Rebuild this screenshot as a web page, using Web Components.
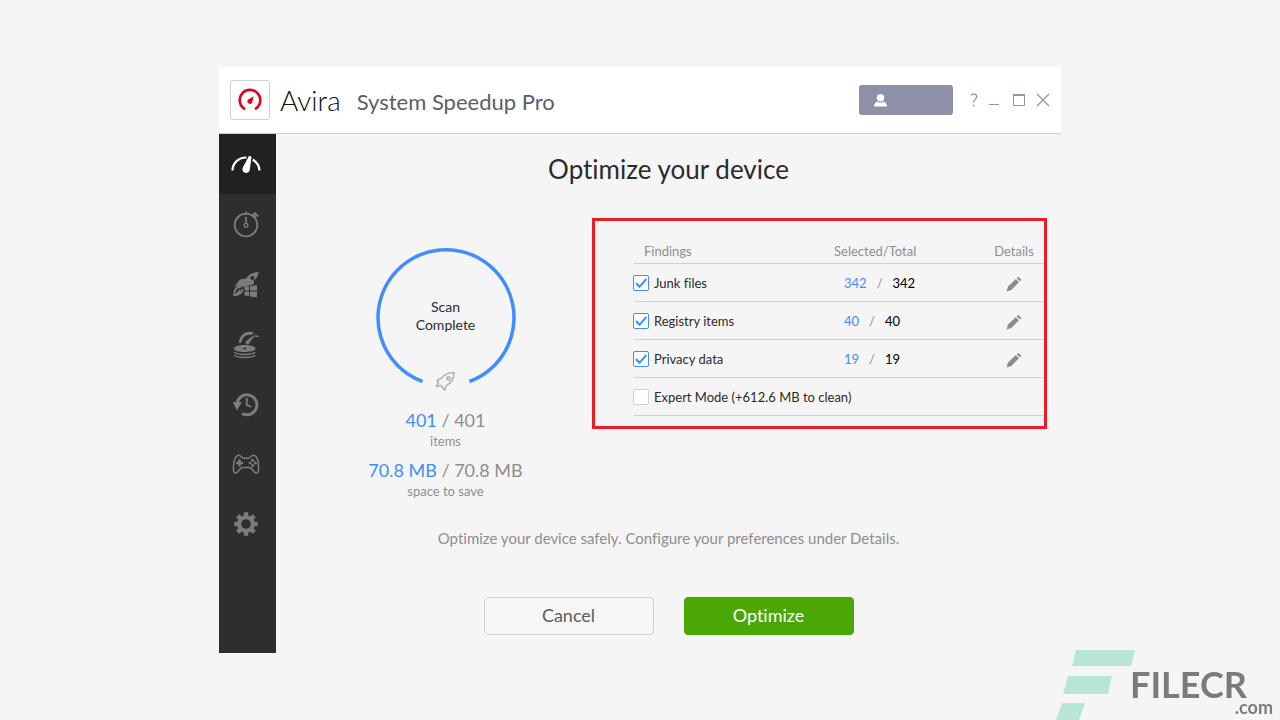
<!DOCTYPE html>
<html lang="en">
<head>
<meta charset="utf-8">
<meta name="viewport" content="width=device-width, initial-scale=1">
<title>System Speedup Pro</title>
<style>
  html { height: 100%; }
  body {
    margin: 0; min-height: 100%; box-sizing: border-box; padding: 16px;
    display: flex; align-items: center; justify-content: center;
    background: #f5f5f5; color: #2b2b2b;
    font-family: Lato, "Noto Sans", sans-serif; font-size: 14px; line-height: 18px;
    font-variant-ligatures: none;
    --blue: #3f8efc; --grey: #8e8e8e; --line: #cfcfcf;
  }
</style>
</head>
<body>
<app-window>
  <title-bar slot="header" brand="Avira" product="System Speedup Pro"></title-bar>
  <side-nav slot="nav"></side-nav>
  <span slot="title">Optimize your device</span>
  <scan-summary slot="summary"></scan-summary>
  <findings-table slot="findings"></findings-table>
  <span slot="hint">Optimize your device safely. Configure your preferences under Details.</span>
  <action-button slot="actions">Cancel</action-button>
  <action-button slot="actions" primary>Optimize</action-button>
</app-window>
<site-mark></site-mark>

<script>
const define = (name, html, setup) => customElements.define(name, class extends HTMLElement {
  constructor() {
    super();
    this.attachShadow({ mode: "open" }).innerHTML = html;
  }
  connectedCallback() { if (setup) setup(this, this.shadowRoot); }
});

define("app-window", `
<style>
  :host { display: block; width: 100%; max-width: 842px; }
  .body { display: grid; grid-template-columns: 57px 1fr; }
  main { display: flex; flex-direction: column; align-items: center; padding: 16px 0 18px; }
  h1 { margin: 0; font-weight: 400; font-size: 26px; line-height: 38px; }
  .content { align-self: stretch; display: grid; grid-template-columns: 1fr 455px; align-items: start; padding: 30px 14px 0 23px; }
  .summary { padding-top: 30px; }
  .hint { margin: 26px 0 0; font-size: 15px; line-height: 24px; color: var(--grey); }
  .actions { display: flex; gap: 30px; margin-top: 47px; }
</style>
<slot name="header"></slot>
<div class="body">
  <slot name="nav"></slot>
  <main>
    <h1><slot name="title"></slot></h1>
    <div class="content">
      <div class="summary"><slot name="summary"></slot></div>
      <slot name="findings"></slot>
    </div>
    <p class="hint"><slot name="hint"></slot></p>
    <div class="actions"><slot name="actions"></slot></div>
  </main>
</div>`);

define("title-bar", `
<style>
  :host { display: block; background: #fff; border-bottom: 1px solid #cbcdd0; }
  header { display: flex; align-items: center; min-height: 66px; padding: 0 8px 0 11px; }
  .tile { display: grid; place-items: center; box-sizing: border-box; width: 40px; height: 40px; border: 1px solid #c9d2d2; border-radius: 3px; }
  .brand { margin-left: 10px; font-size: 28px; font-weight: 300; line-height: 40px; color: #111; }
  .product { margin-left: 16px; padding-top: 4px; font-size: 22px; line-height: 36px; color: #5a5f69; flex: 1; }
  button { border: 0; padding: 0; background: none; font: inherit; color: #8d94ae; display: grid; place-items: center; }
  .user { width: 94px; height: 30px; border-radius: 3px; background: #8d90a6; justify-items: start; padding-left: 15px; margin-right: 12px; }
  .controls { display: flex; gap: 4px; }
  .controls button { width: 20px; height: 20px; }
  .controls button:first-child { width: 16px; }
  svg { display: block; }
</style>
<header>
  <span class="tile"><svg width="26" height="26" viewBox="0 0 26 26">
    <path d="M8 22.2A10.300 10.300 0 1 1 18 22.200" fill="none" stroke="#e2001a" stroke-width="2.600"/>
    <path d="M16.600 9.200L15.200 15.400A2.500 2.500 0 1 1 11.200 12.500Z" fill="#e2001a"/></svg></span>
  <span class="brand"></span><span class="product"></span>
  <button class="user" aria-label="Account"><svg width="13" height="13" viewBox="0 0 13 13" fill="#fff">
    <circle cx="6.500" cy="3.800" r="3.700"/><path d="M0 12.500C.2 9 2 7.700 3.600 7.400C5 9 8 9 9.400 7.400C11 7.700 12.800 9 13 12.500Z"/></svg></button>
  <div class="controls">
    <button aria-label="Help"><svg width="14" height="14" viewBox="0 0 14 14" fill="none" stroke="currentColor" stroke-width="1.300"><path d="M5 2.200C6.500.6 10.700.6 10.700 3.600C10.700 6 7.700 6.300 7.700 9.500M7.700 11.800V13.500"/></svg></button>
    <button aria-label="Minimize"><svg width="14" height="14" viewBox="0 0 14 14"><path d="M1 11h10v1H1z" fill="currentColor"/></svg></button>
    <button aria-label="Maximize"><svg width="14" height="14" viewBox="0 0 14 14" fill="none" stroke="currentColor"><path d="M1.500 1v11.500h11V1"/><path d="M1 2h12" stroke-width="2"/></svg></button>
    <button aria-label="Close"><svg width="14" height="14" viewBox="0 0 14 14" fill="none" stroke="currentColor" stroke-width="1.200"><path d="M1 1l12 12M13 1L1 13"/></svg></button>
  </div>
</header>`, (el, root) => {
  root.querySelector(".brand").textContent = el.getAttribute("brand");
  root.querySelector(".product").textContent = el.getAttribute("product");
});

define("side-nav", `
<style>
  :host { display: block; background: #2e2e2e; }
  nav { display: flex; flex-direction: column; }
  button { height: 60px; border: 0; padding: 0 4px 0 0; background: none; color: #7c7c7c; display: grid; place-items: center; }
  button[aria-current] { background: #212121; color: #fff; }
  svg { display: block; width: 32px; height: 32px; fill: none; stroke: currentColor; }
  .f { fill: currentColor; stroke: none; }
</style>
<nav aria-label="Sections">
  <button aria-current="page" aria-label="Status"><svg viewBox="0 0 32 32">
    <path d="M2.500 22.500A13.500 13 0 0 1 16.500 9.500M22.800 11.800A13 13 0 0 1 29.500 22.500" stroke-width="2.200"/>
    <path class="f" d="M18.800 8.200Q21 7.500 21.500 9L19.800 21.500A3.700 3.700 0 1 1 12.700 19.800Z"/></svg></button>
  <button aria-label="Scan"><svg viewBox="0 0 32 32">
    <circle cx="16" cy="17" r="11.300" stroke-width="1.800"/><circle cx="16" cy="17.300" r="1.900" stroke-width="1.300"/>
    <path d="M16 9v6.500M16 3.500v3M24 4.500l4.500 4M22.500 6l3.500 3" stroke-width="1.700"/></svg></button>
  <button aria-label="Startup"><svg viewBox="0 0 32 32">
    <path class="f" fill-rule="evenodd" d="M28.500 4Q20 4.500 16 10.500L10 11.500L4.500 18.500L10.500 18L15.500 20L18.500 18L24 16L23.500 12.500Q28 10 28.500 4ZM22.500 8A2 2 0 1 1 22.400 8Z"/>
    <path d="M11 19C6 18.500 4.200 22 4.200 27.300C9 27 12 25.500 12.500 21" stroke-width="2"/><path class="f" d="M4 28l6-7l1 4z"/>
    <path d="M14 19l13-2.500M14 23h13M19.500 18v10" stroke="#2e2e2e"/>
    <path class="f" d="M14.500 18.800l4.500-.7v4.500h-4.500zM20 18l7-1v5.600h-7zM14.500 23.600H19v4.500l-4.500-.7zM20 23.600h7v5.800l-7-1z"/></svg></button>
  <button aria-label="Disk"><svg viewBox="0 0 32 32">
    <path class="f" fill-rule="evenodd" d="M4 20.500C4 15.800 25.500 15.800 25.500 20.500S4 25.200 4 20.500ZM12.800 20.500C12.800 21.500 16.800 21.500 16.800 20.500S12.800 19.500 12.800 20.500Z"/>
    <path d="M4.500 24C6 27.200 23.500 27.200 25 24M4.500 27C6 30.200 23.500 30.200 25 27" stroke-width="1.500"/>
    <path class="f" d="M9 15C9 8 15 1.500 24 4.500L21.500 7C16 5.800 13 9 11 15ZM26.500 5.500L19.500 14.500A2 2 0 1 1 16.800 12.500ZM26.800 6.800L29 9H24.700Z"/></svg></button>
  <button aria-label="History"><svg viewBox="0 0 32 32">
    <path d="M7 15.500A10 10 0 1 1 12 25.500" stroke-width="3"/>
    <path class="f" d="M2.800 14H12L6.900 22.500Z"/><path d="M16.700 10v7.200l4.300 1.500" stroke-width="1.900"/></svg></button>
  <button aria-label="Games"><svg viewBox="0 0 32 32">
    <path d="M9 7.200C10.500 7.200 12 10 13.500 10.200H18.500C20 10 21.500 7.200 23.200 7.200C27.500 7.200 28.600 15 28.600 21C28.600 26.200 25.500 26 23.200 22.500C22 20.500 20.500 19.500 18.500 19.500H13.500C11.500 19.500 10 20.500 8.800 22.500C6.500 26 3.400 26.200 3.400 21C3.400 15 4.500 7.200 9 7.200Z" stroke-width="1.500"/>
    <path d="M9.500 11.500v7M6 15h7" stroke-width="2.400"/><g class="f"><circle cx="22.700" cy="12.300" r="1.500"/><circle cx="22.700" cy="17.600" r="1.500"/><circle cx="20" cy="15" r="1.500"/><circle cx="25.400" cy="15" r="1.500"/></g></svg></button>
  <button aria-label="Settings"><svg viewBox="0 0 32 32">
    <circle cx="16" cy="16" r="6.800" stroke-width="4"/>
    <g stroke-width="4.400"><path d="M16 8.500v-4.200M16 23.500v4.200M8.500 16H4.300M23.500 16h4.200M10.700 10.700l-3-3M21.300 10.700l3-3M10.700 21.300l-3 3M21.300 21.300l3 3"/></g></svg></button>
</nav>`);

define("scan-summary", `
<style>
  :host { display: flex; flex-direction: column; align-items: center; text-align: center; color: var(--grey); }
  .ring { display: grid; place-items: center; margin-bottom: 20px; }
  .ring > * { grid-area: 1 / 1; }
  .state { width: 80px; padding-bottom: 4px; color: #2b2b2b; }
  .figure { font-size: 18px; line-height: 24px; }
  .figure b { font-weight: 400; color: var(--blue); }
  .unit { font-size: 13px; line-height: 18px; }
  .unit + .figure { margin-top: 8px; }
  svg { display: block; overflow: visible; }
</style>
<div class="ring">
  <svg width="140" height="140" viewBox="0 0 140 140" fill="none">
    <path d="M46.500 133.500A68 68 0 1 1 93.500 133.500" stroke="#3f8efc" stroke-width="3.500"/>
    <g stroke="#b4b4b4" stroke-width="1.700" stroke-linejoin="round">
      <path d="M78 124.500C71 124.500 68 127 65.500 130L61 132.500L62.500 134.500L60.500 138.500L65 137.500L68.500 142L70.500 137.500C76 134.500 78 131 78 124.500Z"/>
      <circle cx="72.500" cy="130.500" r="1.600"/></g>
  </svg>
  <span class="state">Scan Complete</span>
</div>
<div class="figure"><b>401</b> / 401</div>
<div class="unit">items</div>
<div class="figure"><b>70.8 MB</b> / 70.8 MB</div>
<div class="unit">space to save</div>`);

define("findings-table", `
<style>
  :host { display: block; border: 3px solid #ed1c24; padding: 0 0 10px 39px; }
  table { width: 100%; border-collapse: separate; border-spacing: 0; table-layout: fixed; font-size: 13px; line-height: 18px; }
  th, td { padding: 0; text-align: left; border-bottom: 1px solid var(--line); font-weight: 400; }
  th { box-sizing: border-box; height: 43px; padding-bottom: 3px; vertical-align: bottom; color: var(--grey); }
  th:first-child { padding-left: 10px; }
  td { height: 37px; }
  .col-count { width: 150px; } .col-details { width: 60px; }
  th:last-child, td.edit { text-align: center; }
  label { display: flex; align-items: center; gap: 5px; margin-left: -1px; }
  input { appearance: none; box-sizing: border-box; flex: none; width: 16px; height: 16px; margin: 0; border: 1px solid #cfcfcf; border-radius: 2px; background: #fff; }
  input:checked { border-color: var(--blue); background: #fff url("data:image/svg+xml,%3Csvg xmlns='http://www.w3.org/2000/svg' viewBox='0 0 14 14'%3E%3Cpath d='M2 7l3.500 3.800L12.300 3' fill='none' stroke='%233f8efc' stroke-width='2'/%3E%3C/svg%3E"); }
  .count { display: flex; gap: 10px; padding-left: 10px; color: #000; }
  .count b { font-weight: 400; color: var(--blue); }
  .count i { font-style: normal; color: var(--grey); }
  button { border: 0; padding: 0; background: none; color: #8c8c8c; vertical-align: middle; }
  svg { display: block; }
</style>
<table>
  <colgroup><col><col class="col-count"><col class="col-details"></colgroup>
  <thead><tr><th scope="col">Findings</th><th scope="col">Selected/Total</th><th scope="col">Details</th></tr></thead>
  <tbody></tbody>
</table>`, (el, root) => {
  const rows = [["Junk files", 342], ["Registry items", 40], ["Privacy data", 19]];
  root.querySelector("tbody").innerHTML = rows.map(([name, n], i) => `
    <tr><td><label for="f${i}"><input type="checkbox" id="f${i}" checked>${name}</label></td>
    <td><div class="count"><b>${n}</b><i>/</i><span>${n}</span></div></td>
    <td class="edit"><button aria-label="Edit ${name}"><svg width="16" height="16" viewBox="0 0 16 16" fill="currentColor">
      <path d="M.5 15.500L2 10.500L9.800 3L13 6.200L5.300 14ZM10.800 2.200L12.200.8L15.500 4L13.900 5.300Z"/></svg></button></td></tr>`).join("") + `
    <tr><td colspan="3"><label for="expert"><input type="checkbox" id="expert">Expert Mode (+612.6 MB to clean)</label></td></tr>`;
});

define("action-button", `
<style>
  :host { display: block; }
  button { box-sizing: border-box; width: 170px; height: 38px; padding: 0 0 2px; border: 1px solid #cfcfcf; border-radius: 4px; background: #f6f6f6; color: #5c5c5c; font: inherit; font-size: 18px; line-height: 24px; }
  :host([primary]) button { background: #4aa704; border-color: #4aa704; color: #fff; }
</style>
<button type="button"><slot></slot></button>`);

define("site-mark", `
<style>
  :host { position: fixed; right: 7px; bottom: 0; display: flex; align-items: flex-start; color: #7b7b7b; font-weight: 700; pointer-events: none; }
  .name { display: flex; flex-direction: column; width: 143px; margin: 18px 0 0 -6px; }
  .big { font-size: 36px; line-height: 32px; }
  .small { align-self: flex-end; font-size: 18px; line-height: 14px; }
  svg { display: block; }
</style>
<svg width="80" height="70" viewBox="0 0 80 70" fill="#b8e6d4"><path d="M20 0H79L75 16H16ZM12 26H54L56 25L52 44H7ZM6 53H29L23 70H0Z"/></svg>
<div class="name"><span class="big">FILECR</span><span class="small">.com</span></div>`);
</script>
</body>
</html>
